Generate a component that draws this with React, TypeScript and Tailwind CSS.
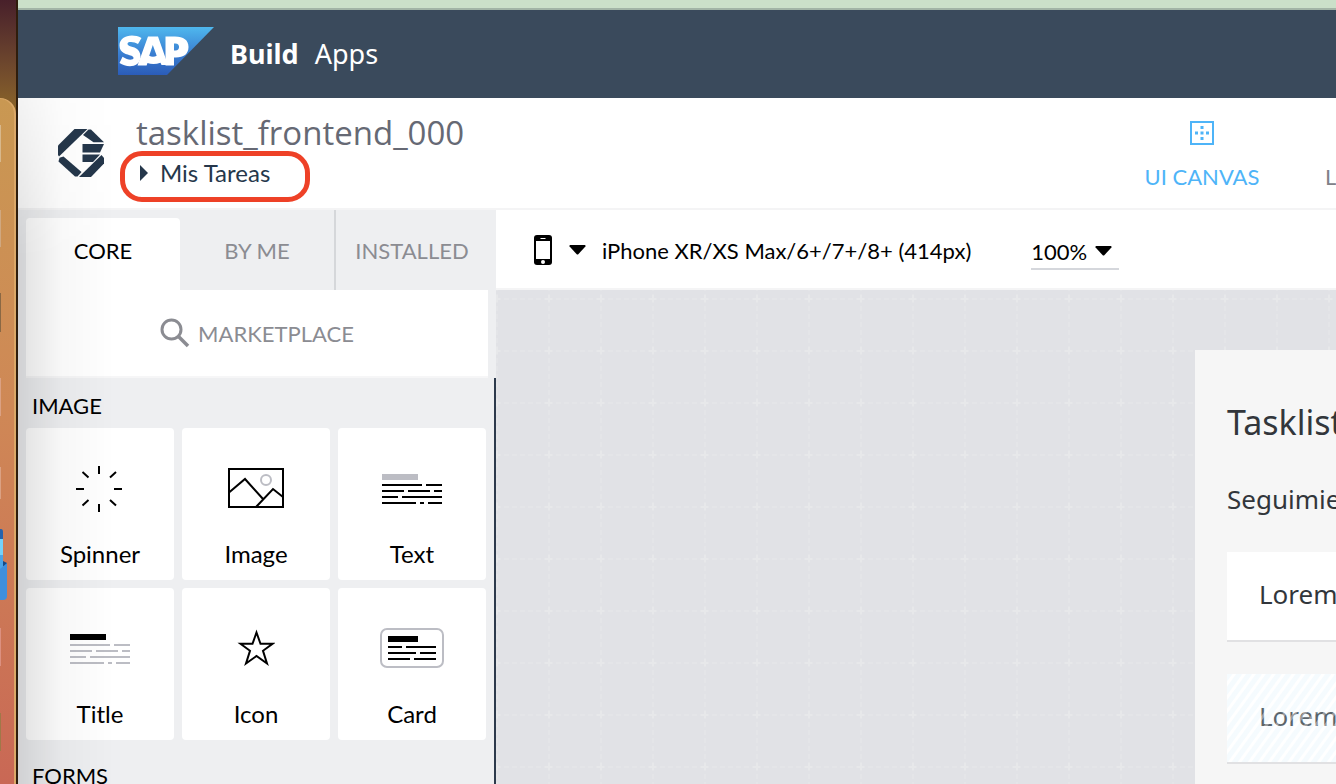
import type { ReactNode } from "react";

function Dock() {
  return (
    <aside
      aria-hidden="true"
      className="relative w-[18px] shrink-0 overflow-hidden border-r-2 border-[#2f1d0c] bg-linear-to-b from-[#48202a] to-[#8a6428] to-[110px] pt-[98px]"
    >
      <div className="h-full rounded-tr-[18px] border-t border-r-2 border-[#dba868] bg-linear-to-b from-[#c99852] via-[#cf8856] via-45% to-[#c96855]" />
      <div className="absolute top-[125px] left-0 h-[37px] w-px bg-[#d8b88c]" />
      <div className="absolute top-[210px] left-0 h-[37px] w-px bg-[#d0a880]" />
      <div className="absolute top-[293px] left-0 h-[39px] w-px bg-[#8a6844]" />
      <div className="absolute top-[378px] left-0 h-[38px] w-px bg-[#dba183]" />
      <div className="absolute top-[467px] left-0 h-[32px] w-px bg-[#dba183]" />
      <div className="absolute top-[628px] left-0 h-[38px] w-px bg-[#dc9080]" />
      <div className="absolute top-[713px] left-0 h-[38px] w-px bg-[#a07848]" />
      <svg className="absolute top-[529px] left-0" width="8" height="72" viewBox="0 0 8 72">
        <path d="M0 0h1q2 0 2 3v40H0z" fill="#2563ad" />
        <path d="M0 10h3v34H0z" fill="#74d2fa" />
        <path d="M0 26h3v18H0z" fill="#4aa4e6" />
        <path d="M3 32l4 2v4l-4-1z" fill="#164a86" />
        <path d="M0 40L7 34v33q0 4-4 4H0z" fill="#3f8fdc" />
      </svg>
    </aside>
  );
}

function SapLogo() {
  return (
    <svg width="96" height="48" viewBox="0 0 96 48" role="img" aria-label="SAP">
      <defs>
        <linearGradient id="sap" x1="0" y1="0" x2="0" y2="1">
          <stop offset="0" stopColor="#4fb8ee" />
          <stop offset="0.55" stopColor="#3a7fd2" />
          <stop offset="1" stopColor="#2b5cb8" />
        </linearGradient>
      </defs>
      <path d="M0 0h96L49 48H0z" fill="url(#sap)" />
      <g fill="#fff" fillRule="evenodd">
        <path d="M23.500 11L20 17C17.500 15.200 14 14.600 11.500 15C8.800 15.600 9 18 11.500 19C15 20.200 22.500 21 22.500 29.500C22.500 36.500 17 39.200 12 39.200C8 39.200 4.500 38 1.500 36L4.500 29.800C8.500 32.500 11.500 33 13.800 32.600C16.300 32 16 29.600 13.500 28.700C9 27.200 1.500 26.500 1.500 18.500C1.500 9 14 6 23.500 11Z" />
        <path d="M30 9.500H40L50 38H43.500L42.500 35.800C38 37.500 33 37.500 29.500 36L28.600 38.500H19.500ZM34.800 18L31.200 28.800C33.500 30 36.500 30 38.700 28.800Z" />
        <path d="M47.500 9.500H57C65.500 9.500 70.500 13 70.500 20C70.500 27 65.500 30.500 58 30.500H56V38.500H47.500ZM56 16.500V23.500H57.500C62.300 23.500 62.300 16.500 57.500 16.500Z" />
      </g>
    </svg>
  );
}

function AppMark() {
  return (
    <svg width="48" height="50" viewBox="0 0 48 50" fill="#25374b" aria-hidden="true">
      <path d="M16.500 1H29.500L1 28.500L0 27V17.500Z" />
      <path d="M30.500 1.500H33L46 14.300H35.500L25 7Z" />
      <path d="M24.500 16H46L42 24.500H24.500Z" />
      <path d="M24.500 26.500H42L35 34H24.500Z" />
      <path d="M43.500 27L46 30V35.500L33 49H21Z" />
      <path d="M1.500 29.800L5.500 28.500L23.500 44L19.500 48.500H17L.5 33.500Z" />
    </svg>
  );
}

function Caret() {
  return (
    <svg width="17" height="10" viewBox="0 0 17 10" aria-hidden="true">
      <path d="M1 0H16Q17 .5 16.400 1.500L9.500 9Q8.500 10 7.500 9L.6 1.500Q0 .5 1 0Z" />
    </svg>
  );
}

const spinner = (
  <svg width="48" height="48" viewBox="0 -1 48 48" stroke="#000" strokeWidth="2" aria-hidden="true">
    <path d="M23 1v8M23 39v8M0 24h8M38 24h8M6.500 7l6 5.500M34 35l6 5.500M6.500 40.500l6-5.500M34 12.500l6-5.500" />
  </svg>
);

const image = (
  <svg width="56" height="40" viewBox="0 0 56 40" fill="none" stroke="#000" strokeWidth="2" aria-hidden="true">
    <circle cx="38" cy="12" r="5" stroke="#bcbdc4" />
    <path d="M1 24.500L17 11L35 31M28 39L45 21L55 29" />
    <rect x="1" y="1" width="54" height="38" />
  </svg>
);

function Lines({ bar, lines }: { bar: string; lines: string }) {
  return (
    <svg width="60" height="32" viewBox="0 -2 60 32" aria-hidden="true">
      <path d="M0 0h36v6H0z" fill={bar} />
      <path
        d="M0 11h40M44 11h16M0 17h22M26 17h22M52 17h8M0 23h16M20 23h40M0 29h34M38 29h4M46 29h14"
        stroke={lines}
        strokeWidth="2"
      />
    </svg>
  );
}

const star = (
  <svg width="38" height="38" viewBox="0 0 38 38" fill="none" stroke="#000" strokeWidth="2" aria-hidden="true">
    <path d="M19.500 3.500L23.500 14.800H35.500L26 21.800L30 34.500L19.500 27L9 34.500L13 21.800L3.500 14.800H15.500Z" />
  </svg>
);

const card = (
  <svg width="64" height="40" viewBox="0 0 64 40" fill="none" strokeWidth="2" aria-hidden="true">
    <rect x="1" y="1" width="62" height="38" rx="6" stroke="#bcbdc4" />
    <path d="M8 8h30v6H8z" fill="#000" />
    <path d="M8 19h14M26 19h30M8 25h28M40 25h16M8 31h22M34 31h22" stroke="#000" />
  </svg>
);

const components: { name: string; icon: ReactNode }[] = [
  { name: "Spinner", icon: spinner },
  { name: "Image", icon: image },
  { name: "Text", icon: <Lines bar="#bcbdc4" lines="#000" /> },
  { name: "Title", icon: <Lines bar="#000" lines="#bcbdc4" /> },
  { name: "Icon", icon: star },
  { name: "Card", icon: card },
];

function Library() {
  return (
    <aside className="flex w-[478px] shrink-0 flex-col bg-[#eeeff1]">
      <div className="flex h-20 shrink-0 pl-2 text-[22px] text-[#8b8c92]">
        <button className="mt-2 w-[154px] rounded-t bg-white pb-2 text-black">CORE</button>
        <button className="w-[154px]">BY ME</button>
        <button className="w-[154px] border-l-2 border-[#d5d7da]">INSTALLED</button>
      </div>
      <button className="mr-2 ml-2 flex h-[88px] shrink-0 items-center justify-center gap-2 border-b-2 border-[#f6f6f7] bg-white text-[22px] text-[#8b8c92]">
        <svg width="30" height="30" viewBox="0 0 30 30" fill="none" stroke="#8b8c92" aria-hidden="true">
          <circle cx="11.500" cy="11.500" r="9.500" strokeWidth="3" />
          <path d="M18 18L28 28" strokeWidth="3.600" />
        </svg>
        MARKETPLACE
      </button>
      <div className="grow border-r-2 border-[#2d3a4c] pr-2 pl-2">
        <h2 className="flex h-[50px] items-center pt-1 pl-1.5 text-[22px]">IMAGE</h2>
        <div className="grid grid-cols-3 gap-2">
          {components.map((c) => (
            <button key={c.name} className="flex h-[152px] flex-col rounded bg-white pt-9 text-[24px]">
              <span className="flex h-12 w-full items-center justify-center">{c.icon}</span>
              <span className="mt-6 w-full leading-9">{c.name}</span>
            </button>
          ))}
        </div>
        <h2 className="flex h-[66px] items-center pt-1 pl-1.5 text-[22px]">FORMS</h2>
      </div>
    </aside>
  );
}

function Canvas() {
  return (
    <main className="flex min-w-0 grow flex-col">
      <div className="flex h-20 shrink-0 items-center border-b-2 border-[#f4f4f5] bg-white pt-0.5 pl-[37px] text-[22px] whitespace-nowrap">
        <button className="flex items-center">
          <svg width="20" height="32" viewBox="0 0 20 32" aria-hidden="true">
            <rect x="1" y="1" width="18" height="30" rx="3" />
            <path d="M3 7h14v18H3z" fill="#fff" />
            <path d="M7.500 4.500h5" stroke="#fff" />
            <circle cx="10" cy="28" r="2" fill="#fff" />
          </svg>
          <span className="pr-4 pl-4">
            <Caret />
          </span>
          iPhone XR/XS Max/6+/7+/8+ (414px)
        </button>
        <button className="ml-[60px] flex w-[88px] items-center gap-2 border-b-2 border-[#d5d7dc] pt-1">
          100% <Caret />
        </button>
      </div>
      <div className="relative flex grow justify-end overflow-hidden bg-[#e1e2e6] pt-[60px]">
        <svg className="absolute inset-0 h-full w-full" aria-hidden="true">
          <defs>
            <pattern id="grid" y="8" width="52" height="52" patternUnits="userSpaceOnUse">
              <g stroke="#e4e5e8" strokeWidth="2" strokeDasharray="5 3">
                <path d="M0 1H52M1 0V52" />
              </g>
              <path d="M0 1H4M49 1H52M1 0V4M1 49V52" stroke="#e7e8ea" strokeWidth="2" />
            </pattern>
          </defs>
          <rect width="100%" height="100%" fill="url(#grid)" />
        </svg>
        <section className="relative w-[141px] overflow-hidden bg-[#f6f6f6] pt-[47px] pl-8 font-['Noto_Sans','Liberation_Sans',sans-serif] whitespace-nowrap text-[#32363b]">
          <h1 className="text-[34px] leading-[50px]">Tasklist</h1>
          <p className="mt-8 text-[26px] leading-10">Seguimiento</p>
          <div className="mt-[33px] flex h-[90px] items-center border-b-2 border-[#e1e1e3] bg-white pb-1 pl-8 text-[26px]">Lorem</div>
          <div className="relative mt-8 flex h-[90px] items-center border-b-2 border-[#e1e1e3] bg-white pb-1 pl-8 text-[26px]">
            Lorem
            <div className="absolute inset-0 bg-[repeating-linear-gradient(-54deg,#d8effb40_0px,#d8effb40_4px,#ffffff80_5px,#ffffff80_7px,#d8effb40_8px)]" />
          </div>
        </section>
      </div>
    </main>
  );
}

export default function App() {
  return (
    <div className="flex h-screen overflow-hidden bg-white font-[Lato,'Liberation_Sans',sans-serif] text-black">
      <Dock />
      <div className="relative flex min-w-0 grow flex-col">
        <div className="h-2.5 shrink-0 border-b-2 border-[#a2b4a6] bg-[#cbe0c9]" />
        <header className="flex h-[88px] shrink-0 items-center bg-[#3a4a5c] pb-1.5 pl-[100px] font-['Noto_Sans','Liberation_Sans',sans-serif] text-[27px] text-white">
          <SapLogo />
          <span className="ml-4 pt-1.5 font-bold">Build</span>
          <span className="ml-4 pt-1.5">Apps</span>
        </header>
        <div className="flex h-28 shrink-0 border-b-2 border-[#f4f4f5] bg-white">
          <div className="mt-[30px] ml-10 h-[50px]">
            <AppMark />
          </div>
          <div className="relative ml-[30px] pt-[15px]">
            <div className="font-['Open_Sans','Liberation_Sans',sans-serif] text-[33px] leading-10 text-[#666974]">
              tasklist_frontend_000
            </div>
            <button className="flex h-10 items-center gap-3 pl-1 text-[24px] text-[#25374b]">
              <svg width="8" height="16" viewBox="0 0 8 16" aria-hidden="true">
                <path d="M0 0L8 8L0 16Z" fill="#25374b" />
              </svg>
              Mis Tareas
            </button>
            <div className="absolute top-[53px] -left-4 h-[51px] w-[190px] rounded-[22px] border-[5px] border-[#ee4127]" />
          </div>
          <nav className="ml-auto flex w-[193px] gap-16 overflow-hidden pt-[23px] text-[22px] whitespace-nowrap">
            <button className="flex w-[118px] shrink-0 flex-col items-center text-[#4eb4f8]">
              <svg width="24" height="24" viewBox="0 0 24 24" aria-hidden="true">
                <rect x="1" y="1" width="22" height="22" fill="none" stroke="#4eb4f8" strokeWidth="2" />
                <path d="M10.500 5h3v3h-3zM10.500 10.500h3v3h-3zM10.500 16h3v3h-3zM5 10.500h3v3H5zM16 10.500h3v3h-3z" fill="#4eb4f8" />
              </svg>
              <span className="mt-3.5 leading-9">UI CANVAS</span>
            </button>
            <button className="flex shrink-0 flex-col pt-[38px] text-[#808188]">
              <span className="leading-9">LOGIC</span>
            </button>
          </nav>
        </div>
        <div className="flex min-h-0 grow">
          <Library />
          <Canvas />
        </div>
        <div className="pointer-events-none absolute top-[98px] bottom-0 left-0 w-24 bg-linear-to-r from-black/12 via-black/3 via-45% to-transparent mask-[linear-gradient(to_bottom,rgba(0,0,0,0.4),black_160px)]" />
      </div>
    </div>
  );
}
